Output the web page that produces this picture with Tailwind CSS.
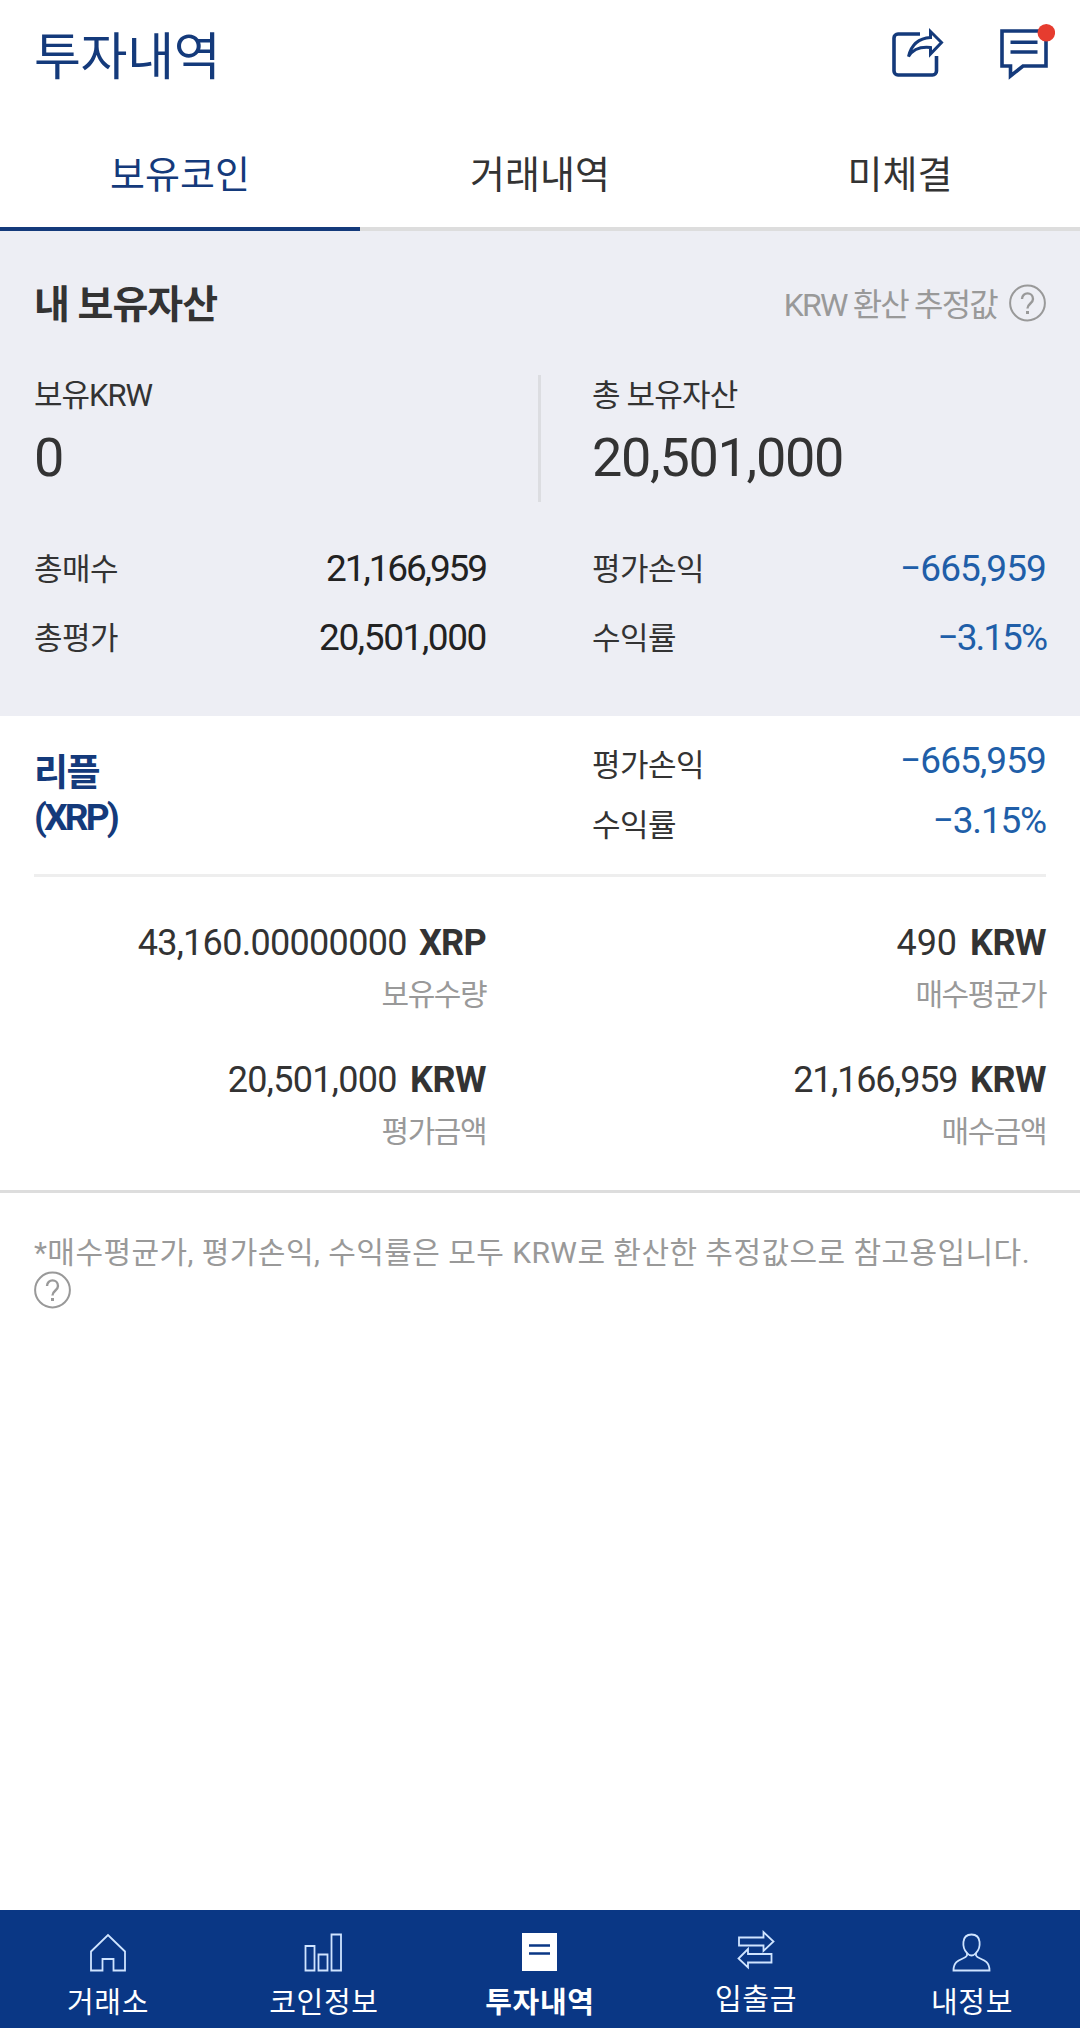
<!DOCTYPE html>
<html lang="ko">
<head>
  <meta charset="UTF-8" />
  <meta name="viewport" content="width=device-width, initial-scale=1.0" />
  <title>투자내역</title>
  <script src="https://cdn.jsdelivr.net/npm/@tailwindcss/browser@4"></script>
</head>
<body class="bg-white">
<div class="flex flex-col w-[1080px] h-[2028px] overflow-hidden bg-white text-[#333] whitespace-nowrap font-[Roboto,'Noto_Sans_CJK_KR',sans-serif]">

  <!-- Header -->
  <header class="flex justify-between h-[125px] pl-[34px] pr-[25px] text-[#143a7b]">
    <h1 class="h-[116px] leading-[115px] text-[51px] tracking-[-0.3px]">투자내역</h1>
    <div class="flex gap-[54px] pt-[22px]">
      <svg class="w-[56px] h-[60px]" viewBox="0 0 56 60" fill="none" stroke="currentColor" stroke-width="3.6">
        <path d="M31 12H9a4 4 0 0 0-4 4v33a4 4 0 0 0 4 4h34.500a4 4 0 0 0 4-4V34" />
        <path d="M19.500 34.500C23 20 32 16 41.500 15.500V9.500L52.500 20.500 41.500 32V25.500C32 24.500 24 27 19.500 34.500Z" stroke-width="3" />
      </svg>
      <svg class="w-[56px] h-[60px]" viewBox="0 0 56 60">
        <path d="M3 9h44v35H24L11.500 54V44H3Z" fill="none" stroke="currentColor" stroke-width="3.600" />
        <path d="M11.500 20.300h27M11.500 30h27" stroke="currentColor" stroke-width="3.600" />
        <circle cx="47.300" cy="10.700" r="8.800" fill="#e63c2f" />
      </svg>
    </div>
  </header>

  <!-- Tabs -->
  <nav class="grid grid-cols-3 h-[106px] text-center text-[38px] leading-[101px]">
    <a class="border-b-4 border-[#143a7b] text-[#143a7b]">보유코인</a>
    <a class="border-b-4 border-[#ddd]">거래내역</a>
    <a class="border-b-4 border-[#ddd]">미체결</a>
  </nav>

  <!-- Asset summary -->
  <section class="h-[485px] px-[34px] pt-[39px] bg-[#edeef4]">
    <div class="flex items-center justify-between h-[70px]">
      <h2 class="text-[39px] font-bold tracking-[-1px]">내 보유자산</h2>
      <div class="flex items-center gap-[12px] text-[#999]">
        <span class="text-[32px] tracking-[-1.800px]">KRW 환산 추정값</span>
        <svg class="w-[37px] h-[38px] -mt-[5px]" viewBox="0 0 37 38" fill="none" stroke="currentColor" stroke-width="2">
          <circle cx="18.500" cy="19" r="17.400" />
          <path d="M13 15c0-7.500 11-7.500 11 0 0 4.500-5.500 4.500-5.500 9.500" stroke-width="2.400" />
          <path d="M17 28.500h3" stroke-width="3" />
        </svg>
      </div>
    </div>
    <div class="flex h-[127px] mt-[35px]">
      <div class="w-[507px] border-r-[3px] border-[#dcdde1]">
        <p class="text-[31px] leading-[41px] tracking-[-1px]">보유KRW</p>
        <p class="text-[54px] leading-[83px]">0</p>
      </div>
      <div class="pl-[51px]">
        <p class="text-[31px] leading-[41px] tracking-[-0.800px]">총 보유자산</p>
        <p class="text-[54px] leading-[83px] tracking-[-1.300px]">20,501,000</p>
      </div>
    </div>
    <div class="grid grid-cols-[452px_454px] gap-x-[106px] mt-[32px] text-[31px] leading-[69px] tracking-[-0.500px]">
      <div class="flex justify-between"><span class="pt-px">총매수</span><span class="text-[37px] tracking-[-2.100px] text-[#222]">21,166,959</span></div>
      <div class="flex justify-between"><span class="pt-px">평가손익</span><span class="text-[37px] tracking-[-0.900px] text-[#205ea8]">−665,959</span></div>
      <div class="flex justify-between -mt-px"><span class="pt-px">총평가</span><span class="text-[37px] tracking-[-1.400px] text-[#222]">20,501,000</span></div>
      <div class="flex justify-between -mt-px"><span class="pt-px">수익률</span><span class="text-[37px] tracking-[-2px] text-[#205ea8]">−3.15%</span></div>
    </div>
  </section>

  <!-- Coin -->
  <section class="h-[477px] border-b-[3px] border-[#ddd]">
    <div class="flex h-[161px] mx-[34px] pt-[15px] border-b-[3px] border-[#eee]">
      <div class="w-[558px] pt-[21px] text-[37px] leading-[44px] font-bold text-[#143a7b]">
        <p class="tracking-[-1.500px]">리플</p>
        <p class="tracking-[-2.800px]">(XRP)</p>
      </div>
      <div class="w-[454px] text-[31px] leading-[60px] tracking-[-0.500px]">
        <div class="flex justify-between h-[60px]"><span class="pt-[5px]">평가손익</span><span class="text-[37px] tracking-[-0.900px] text-[#205ea8]">−665,959</span></div>
        <div class="flex justify-between h-[60px]"><span class="pt-[5px]">수익률</span><span class="text-[37px] tracking-[-1.200px] text-[#205ea8]">−3.15%</span></div>
      </div>
    </div>
    <div class="grid grid-cols-[452px_454px] gap-x-[106px] gap-y-[33px] px-[34px] pt-[41px] text-right text-[36px] tracking-[-0.700px]">
      <div>
        <p class="leading-[50px]">43,160.00000000 <b class="ml-[4px]">XRP</b></p>
        <p class="text-[30px] leading-[54px] tracking-[-1.500px] text-[#999]">보유수량</p>
      </div>
      <div>
        <p class="leading-[50px] tracking-normal">490 <b class="ml-[4px] tracking-[-0.500px]">KRW</b></p>
        <p class="text-[30px] leading-[54px] tracking-[-1.500px] text-[#999]">매수평균가</p>
      </div>
      <div>
        <p class="leading-[50px]">20,501,000 <b class="ml-[5px] tracking-[-0.500px]">KRW</b></p>
        <p class="text-[30px] leading-[54px] tracking-[-1.500px] text-[#999]">평가금액</p>
      </div>
      <div>
        <p class="leading-[50px] tracking-[-1.200px]">21,166,959 <b class="ml-[5px] tracking-[-0.500px]">KRW</b></p>
        <p class="text-[30px] leading-[54px] tracking-[-1.500px] text-[#999]">매수금액</p>
      </div>
    </div>
  </section>

  <!-- Footnote -->
  <div class="grow px-[34px] pt-[41px] text-[#999]">
    <p class="text-[30px] leading-[38px] tracking-[0.440px]">*매수평균가, 평가손익, 수익률은 모두 KRW로 환산한 추정값으로 참고용입니다.</p>
    <svg class="w-[37px] h-[38px] -mt-px" viewBox="0 0 37 38" fill="none" stroke="currentColor" stroke-width="2">
      <circle cx="18.500" cy="19" r="17.400" />
      <path d="M13 15c0-7.500 11-7.500 11 0 0 4.500-5.500 4.500-5.500 9.500" stroke-width="2.400" />
      <path d="M17 28.500h3" stroke-width="3" />
    </svg>
  </div>

  <!-- Bottom navigation -->
  <nav class="grid grid-cols-5 h-[118px] pt-[21px] bg-[#0a3785] text-white text-[29px] leading-[60px] tracking-[0.700px]">
    <a class="flex flex-col items-center">
      <svg class="w-[40px] h-[42px]" viewBox="0 0 40 42" fill="none" stroke="#cfe4ff" stroke-width="1.800">
        <path d="M3 20.500 20 4l17 16.500V39.500H25.500V28H14.500V39.500H3Z" />
      </svg>
      <span>거래소</span>
    </a>
    <a class="flex flex-col items-center">
      <svg class="w-[40px] h-[42px]" viewBox="0 0 40 42" fill="none" stroke="#cfe4ff" stroke-width="1.800">
        <path d="M1.500 15h9v24.500h-9ZM14.500 23.500h9v16h-9ZM27.500 3.500h9.500v36h-9.500Z" />
      </svg>
      <span>코인정보</span>
    </a>
    <a class="flex flex-col items-center font-bold">
      <svg class="w-[40px] h-[42px]" viewBox="0 0 40 42">
        <path d="M2 2h35v38H2Z" fill="#fff" />
        <path d="M9 14.500h21M9 22.500h21" stroke="#0a3785" stroke-width="2.600" />
      </svg>
      <span>투자내역</span>
    </a>
    <a class="flex flex-col items-center -mt-[3px]">
      <svg class="w-[40px] h-[42px]" viewBox="0 0 40 42" fill="none" stroke="#cfe4ff" stroke-width="1.800">
        <path d="M3 9.500h24.500V4L37.500 13.500 27.500 23V17.500H3Z" />
        <path d="M35.500 26H12V21L2.500 30.500 12 39.500V34.500H35.500Z" />
      </svg>
      <span>입출금</span>
    </a>
    <a class="flex flex-col items-center">
      <svg class="w-[40px] h-[42px]" viewBox="0 0 40 42" fill="none" stroke="#cfe4ff" stroke-width="1.800">
        <path d="M15 24.500V22C10 17 9 3.500 19.500 3.500S29 17 24 22V24.500C26 29 37.500 27 37.500 39.500H1.500C1.500 27 13 29 15 24.500Z" />
        <path d="M15 22q4.500 5 9 0" />
      </svg>
      <span>내정보</span>
    </a>
  </nav>
</div>
</body>
</html>
